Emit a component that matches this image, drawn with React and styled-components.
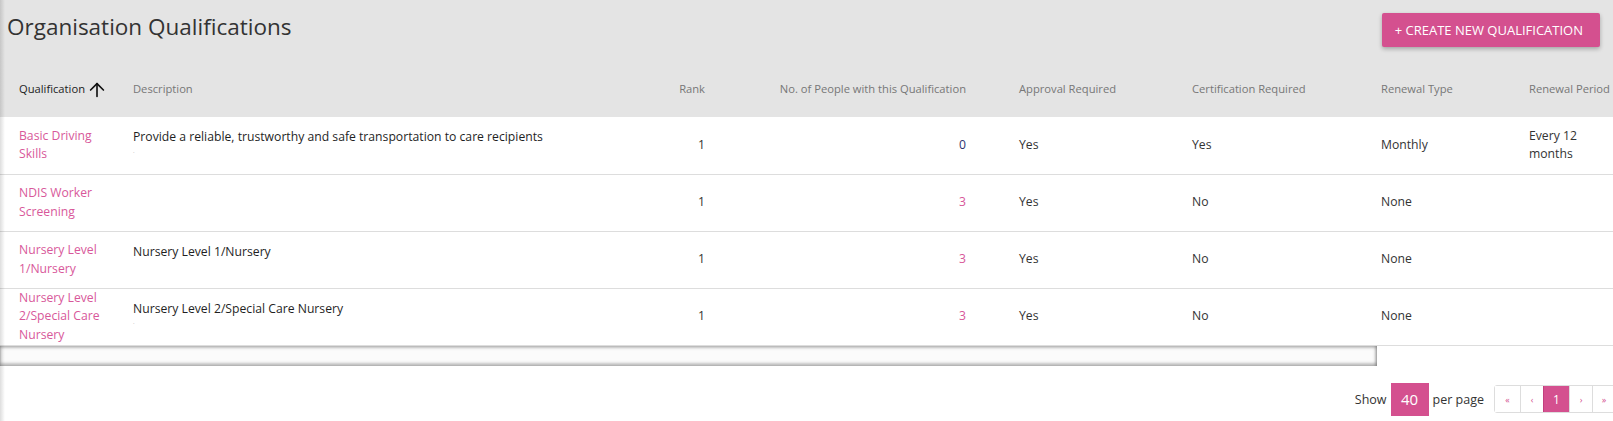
import React from "react";
import styled, { createGlobalStyle } from "styled-components";
import { ArrowUp } from "lucide-react";

const pink = "#d4508f";

const GlobalStyle = createGlobalStyle`
  html, body {
    margin: 0;
    padding: 0;
    background: #fff;
  }
  body {
    font-family: "Open Sans", "Liberation Sans", sans-serif;
    color: #333;
  }
`;

const Page = styled.div`
  position: relative;
  min-height: 421px;
  overflow: hidden;
  background: #fff;
  &::before {
    content: "";
    position: absolute;
    left: 0;
    top: 0;
    bottom: 0;
    width: 5px;
    background: linear-gradient(to right, rgba(0, 0, 0, 0.13), rgba(0, 0, 0, 0));
    z-index: 2;
    pointer-events: none;
  }
`;

const TitleBar = styled.div`
  display: flex;
  justify-content: space-between;
  align-items: flex-start;
  box-sizing: border-box;
  height: 47px;
  padding: 13px 13px 0 7px;
  background: #e4e4e4;
`;

const Title = styled.h1`
  margin: -3px 0 0;
  font-size: 22.5px;
  font-weight: 400;
  line-height: 34px;
  color: #333;
`;

const CreateButton = styled.button`
  height: 34px;
  padding: 0 17px 0 13px;
  border: none;
  border-radius: 2px;
  background: ${pink};
  color: #fff;
  font-family: inherit;
  font-size: 13px;
  box-shadow: 0 2px 4px rgba(0, 0, 0, 0.28);
  cursor: pointer;
`;

const TableWrap = styled.div`
  width: 100%;
  overflow: hidden;
`;

const Table = styled.table`
  width: 1889px;
  table-layout: fixed;
  border-collapse: collapse;
`;

const HeadRow = styled.tr`
  background: #e4e4e4;
`;

const Th = styled.th`
  height: 70px;
  box-sizing: border-box;
  vertical-align: bottom;
  padding: 0 ${(p) => (p.$right ? "43px" : "10px")} 21px ${(p) => p.$pl || "10px"};
  text-align: ${(p) => (p.$right ? "right" : "left")};
  font-size: 11.2px;
  font-weight: 400;
  line-height: 15px;
  color: ${(p) => (p.$active ? "#222" : "#777")};
  white-space: nowrap;
`;

const SortLabel = styled.span`
  display: inline-flex;
  align-items: center;
  height: 15px;
  svg {
    flex-shrink: 0;
    margin: -2px 0 -5px 1px;
    color: #111;
  }
`;

const Row = styled.tr`
  border-bottom: 1px solid #ddd;
`;

const Td = styled.td`
  height: 57px;
  box-sizing: border-box;
  padding: 0 ${(p) => (p.$right ? "43px" : "10px")} 0 ${(p) => p.$pl || "10px"};
  text-align: ${(p) => (p.$right ? "right" : "left")};
  vertical-align: middle;
  font-size: 12.2px;
  line-height: 18.6px;
  color: #333;
`;

const QualLink = styled.a`
  display: block;
  width: 84px;
  color: #d8589a;
  text-decoration: none;
`;

const Desc = styled.div`
  color: #1f1f1f;
`;

const DescTail = styled.span`
  display: block;
  height: 15px;
  font-size: 6px;
  line-height: 8px;
  color: #aaa;
`;

const Count = styled.a`
  color: ${(p) => (p.$zero ? "#2f3470" : "#d8589a")};
  text-decoration: none;
`;

const Period = styled.div`
  width: 80px;
`;

const ScrollThumb = styled.div`
  width: 1377px;
  height: 20px;
  background: #fbfbfb;
  box-shadow: inset 0 2px 3px rgba(0, 0, 0, 0.22), inset 0 -3px 3px rgba(0, 0, 0, 0.22),
    inset -2px 0 3px rgba(0, 0, 0, 0.22);
`;

const Footer = styled.div`
  display: flex;
  justify-content: flex-end;
  align-items: center;
  margin: 17px -3px 0 0;
  font-size: 12px;
  color: #333;
`;

const ShowText = styled.span`
  margin: 0 4px;
  font-size: 12.5px;
`;

const PerPage = styled.span`
  display: flex;
  align-items: center;
  justify-content: center;
  width: 38px;
  height: 33px;
  background: ${pink};
  color: #fff;
  font-size: 15px;
`;

const Pager = styled.ul`
  display: flex;
  margin: 0 0 0 6px;
  padding: 0;
  list-style: none;
  border: 1px solid #ddd;
  border-radius: 3px;
`;

const PageItem = styled.li`
  display: flex;
  align-items: center;
  justify-content: center;
  box-sizing: border-box;
  width: ${(p) => (p.$active ? "27px" : "23px")};
  height: 26px;
  border-left: 1px solid ${(p) => (p.$active ? "#c23f7e" : "#ddd")};
  border-right: ${(p) => (p.$active ? "1px solid #c23f7e" : "none")};
  background: ${(p) => (p.$active ? pink : "#fff")};
  color: ${(p) => (p.$active ? "#fff" : pink)};
  font-size: ${(p) => (p.$active ? "12px" : "9px")};
  &:first-child {
    border-left: none;
    width: 25px;
  }
  & + li {
    margin-left: ${(p) => (p.$active ? "-1px" : "0")};
  }
`;

const columns = [
  { label: "Qualification", pl: "19px", width: 123, active: true },
  { label: "Description", width: 477 },
  { label: "Rank", width: 148, right: true },
  { label: "No. of People with this Qualification", width: 261, right: true },
  { label: "Approval Required", width: 173 },
  { label: "Certification Required", width: 189 },
  { label: "Renewal Type", width: 148 },
  { label: "Renewal Period", width: 100 },
  { label: "", width: 270 },
];

const rows = [
  {
    name: "Basic Driving Skills",
    desc: "Provide a reliable, trustworthy and safe transportation to care recipients",
    tail: true,
    rank: 1,
    count: 0,
    approval: "Yes",
    cert: "Yes",
    type: "Monthly",
    period: "Every 12 months",
  },
  {
    name: "NDIS Worker Screening",
    desc: "",
    rank: 1,
    count: 3,
    approval: "Yes",
    cert: "No",
    type: "None",
    period: "",
  },
  {
    name: "Nursery Level 1/Nursery",
    desc: "Nursery Level 1/Nursery",
    rank: 1,
    count: 3,
    approval: "Yes",
    cert: "No",
    type: "None",
    period: "",
  },
  {
    name: "Nursery Level 2/Special Care Nursery",
    desc: "Nursery Level 2/Special Care Nursery",
    tail: true,
    rank: 1,
    count: 3,
    approval: "Yes",
    cert: "No",
    type: "None",
    period: "",
  },
];

export default function App() {
  return (
    <Page>
      <GlobalStyle />
      <TitleBar>
        <Title>Organisation Qualifications</Title>
        <CreateButton>+ CREATE NEW QUALIFICATION</CreateButton>
      </TitleBar>
      <TableWrap>
        <Table>
          <colgroup>
            {columns.map((c, i) => (
              <col key={i} style={{ width: c.width }} />
            ))}
          </colgroup>
          <thead>
            <HeadRow>
              {columns.map((c, i) => (
                <Th key={i} $pl={c.pl} $right={c.right} $active={c.active}>
                  {c.active ? (
                    <SortLabel>
                      {c.label}
                      <ArrowUp size={22} strokeWidth={1.8} />
                    </SortLabel>
                  ) : (
                    c.label
                  )}
                </Th>
              ))}
            </HeadRow>
          </thead>
          <tbody>
            {rows.map((r) => (
              <Row key={r.name}>
                <Td $pl="19px">
                  <QualLink href="#">{r.name}</QualLink>
                </Td>
                <Td>
                  {r.desc && (
                    <Desc>
                      {r.desc}
                      <DescTail>{r.tail ? "." : ""}</DescTail>
                    </Desc>
                  )}
                </Td>
                <Td $right>{r.rank}</Td>
                <Td $right>
                  <Count href="#" $zero={r.count === 0}>
                    {r.count}
                  </Count>
                </Td>
                <Td>{r.approval}</Td>
                <Td>{r.cert}</Td>
                <Td>{r.type}</Td>
                <Td>
                  <Period>{r.period}</Period>
                </Td>
                <Td />
              </Row>
            ))}
          </tbody>
        </Table>
      </TableWrap>
      <ScrollThumb />
      <Footer>
        <ShowText>Show</ShowText>
        <PerPage>40</PerPage>
        <ShowText>per page</ShowText>
        <Pager>
          <PageItem>«</PageItem>
          <PageItem>‹</PageItem>
          <PageItem $active>1</PageItem>
          <PageItem>›</PageItem>
          <PageItem>»</PageItem>
        </Pager>
      </Footer>
    </Page>
  );
}
